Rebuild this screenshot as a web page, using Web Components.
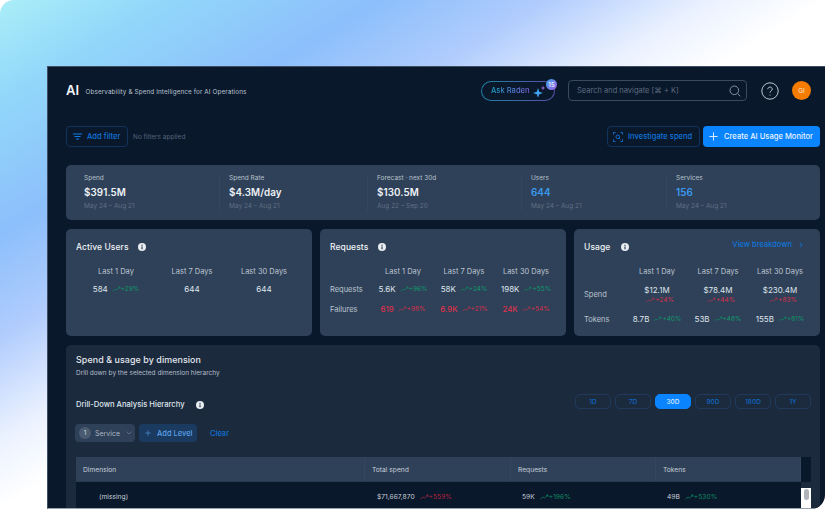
<!DOCTYPE html>
<html><head><meta charset="utf-8"><title>AI</title>
<style>
html,body{margin:0;padding:0;background:#fff;width:825px;height:509px;overflow:hidden}
body{font-family:Inter,"Liberation Sans",sans-serif;color:#dfe5ec}
</style></head><body>
<page-stage>
 <app-header></app-header>
 <app-toolbar></app-toolbar>
 <summary-bar>
  <summary-stat label="Spend" value="$391.5M" range="May 24 – Aug 21"></summary-stat>
  <summary-stat label="Spend Rate" value="$4.3M/day" range="May 24 – Aug 21"></summary-stat>
  <summary-stat label="Forecast · next 30d" value="$130.5M" range="Aug 22 – Sep 20"></summary-stat>
  <summary-stat label="Users" value="644" range="May 24 – Aug 21" accent></summary-stat>
  <summary-stat label="Services" value="156" range="May 24 – Aug 21" accent></summary-stat>
 </summary-bar>
 <card-row>
  <metric-card heading="Active Users" gap="9">
   <metric-grid cols="80px 72px 72px" rows="14px 22px">
    <grid-head>Last 1 Day</grid-head><grid-head>Last 7 Days</grid-head><grid-head>Last 30 Days</grid-head>
    <metric-value value="584" delta="+29%" tone="up"></metric-value><metric-value value="644"></metric-value><metric-value value="644"></metric-value>
   </metric-grid>
  </metric-card>
  <metric-card heading="Requests" gap="10">
   <metric-grid cols="42px 62px 60px 64px" rows="14px 22px 18px">
    <span></span><grid-head>Last 1 Day</grid-head><grid-head>Last 7 Days</grid-head><grid-head>Last 30 Days</grid-head>
    <grid-label>Requests</grid-label><metric-value value="5.6K" delta="+96%" tone="up"></metric-value><metric-value value="58K" delta="+24%" tone="up"></metric-value><metric-value value="198K" delta="+55%" tone="up"></metric-value>
    <grid-label>Failures</grid-label><metric-value value="619" delta="+98%" tone="down" bad></metric-value><metric-value value="6.9K" delta="+21%" tone="down" bad></metric-value><metric-value value="24K" delta="+54%" tone="down" bad></metric-value>
   </metric-grid>
  </metric-card>
  <metric-card heading="Usage" gap="11" link>
   <metric-grid cols="42px 62px 60px 64px" rows="14px 32px 18px">
    <span></span><grid-head>Last 1 Day</grid-head><grid-head>Last 7 Days</grid-head><grid-head>Last 30 Days</grid-head>
    <grid-label>Spend</grid-label><metric-value value="$12.1M" delta="+24%" tone="down" stack></metric-value><metric-value value="$78.4M" delta="+44%" tone="down" stack></metric-value><metric-value value="$230.4M" delta="+83%" tone="down" stack></metric-value>
    <grid-label>Tokens</grid-label><metric-value value="8.7B" delta="+40%" tone="up"></metric-value><metric-value value="53B" delta="+48%" tone="up"></metric-value><metric-value value="155B" delta="+81%" tone="up"></metric-value>
   </metric-grid>
  </metric-card>
 </card-row>
 <dimension-panel></dimension-panel>
</page-stage>
<script>
const FONT='font-family:Inter,"Liberation Sans",sans-serif;';
function el(name,css,html){
  customElements.define(name,class extends HTMLElement{
    connectedCallback(){
      if(this.shadowRoot)return;
      const r=this.attachShadow({mode:'open'});
      const a=n=>this.getAttribute(n);
      r.innerHTML='<style>'+css+'</style>'+(typeof html==='function'?html(a,this):html);
    }
  });
}
const I={
 info:s=>`<svg width="${s}" height="${s}" viewBox="0 0 16 16"><circle cx="8" cy="8" r="8" fill="#e8edf2"/><rect x="6.800" y="7" width="2.400" height="5.500" fill="#2f4158"/><rect x="6.800" y="3.500" width="2.400" height="2.200" fill="#2f4158"/></svg>`,
 trend:c=>`<svg width="9" height="6" viewBox="0 0 9 6" fill="none" stroke="${c}" stroke-width=".7"><path d="M.5 5 3 3l1.600 1L8 1"/><path d="M6 1h2v2"/></svg>`,
 plus:(s,c)=>`<svg width="${s}" height="${s}" viewBox="0 0 10 10" stroke="${c}" stroke-width="1"><path d="M5 .5v9M.5 5h9"/></svg>`
};
el('info-dot',':host{display:inline-flex;line-height:0}',(a)=>I.info(a('size')||8));

el('page-stage',`:host{display:block;position:relative;width:825px;height:509px;overflow:hidden;border-radius:14px;
  background:linear-gradient(to bottom right,#aaeef8 0%,#92d7fa 10%,#8cbffb 23%,#b0ccfd 33%,#eaf1ff 43%,#ffffff 50%);padding:66px 0 0 47px;box-sizing:border-box}
 .app{height:443px;background:#0a182c;border-top:1px solid #3d4d63;border-left:1px solid #3f5066;box-sizing:border-box;padding:0 5px 0 18px;overflow:hidden;border-bottom:1px solid #98a3ae}`,
 '<div class="app"><slot></slot></div>');

el('app-header',`:host{display:flex;align-items:center;height:47px;padding-right:9px;${FONT}}
 .ai{font-size:13px;font-weight:600;color:#f2f5f8;margin-right:6.500px;position:relative;top:-1px}
 .sub{font-size:6.300px;color:#b9c3cf;flex:1;letter-spacing:.02em;position:relative;top:1px}
 .pill{position:relative;box-sizing:border-box;width:74px;height:20px;border-radius:10px;display:flex;align-items:center;padding-left:9px;gap:3px;border:1px solid transparent;
   background:linear-gradient(#0a182c,#0a182c) padding-box,linear-gradient(90deg,#1f7f9e,#5a4fa8) border-box;margin-right:13px}
 .pill b{font-size:7.600px;font-weight:500;background:linear-gradient(90deg,#1aa3c4,#7e63df);-webkit-background-clip:text;background-clip:text;color:transparent}
 .badge{position:absolute;right:-3px;top:-3px;width:11px;height:11px;border-radius:50%;background:linear-gradient(135deg,#38a6ee,#a35ae0);font-size:6px;color:#e9f0f8;display:flex;align-items:center;justify-content:center;font-weight:600}
 .search{box-sizing:border-box;width:179px;height:21px;border:1px solid #3a4b60;border-radius:4px;display:flex;align-items:center;justify-content:space-between;padding:0 5px 0 8px;font-size:7.500px;color:#5d6c80;margin-right:14px}
 .help{margin-right:13px;line-height:0}
 .av{width:19px;height:19px;border-radius:50%;background:#f57c00;font-size:6.500px;color:#f9e9d8;display:flex;align-items:center;justify-content:center}`,
 `<span class="ai">AI</span><span class="sub">Observability &amp; Spend Intelligence for AI Operations</span>
 <div class="pill"><b>Ask Raden</b><svg width="13" height="12" viewBox="0 0 13 12"><path d="M5 3 6.200 6.800 10 8 6.200 9.200 5 13 3.800 9.200 0 8 3.800 6.800z" fill="#3fa5f0"/><path d="M10 .5l.6 1.900 1.900.6-1.900.6L10 5.500l-.6-1.900-1.900-.6 1.900-.6z" fill="#a56be8"/></svg><span class="badge">15</span></div>
 <div class="search"><span>Search and navigate [⌘ + K]</span><svg width="12" height="12" viewBox="0 0 12 12" fill="none" stroke="#8593a5" stroke-width="1"><circle cx="5.300" cy="5.300" r="4.300"/><path d="M8.500 8.500 11.300 11.300"/></svg></div>
 <div class="help"><svg width="18" height="18" viewBox="0 0 18 18" fill="none" stroke="#bcc6d2" stroke-width="1"><circle cx="9" cy="9" r="8.200"/><path d="M6.800 7.200c0-1.300 1-2.200 2.200-2.200s2.200.9 2.200 2.100c0 1.800-2.200 1.800-2.200 3.600"/><circle cx="9" cy="13" r=".6" fill="#bcc6d2" stroke="none"/></svg></div>
 <div class="av">GI</div>`);

el('app-toolbar',`:host{display:flex;align-items:center;height:21px;margin-top:12px;${FONT}font-size:7.600px;font-weight:500}
 .btn{box-sizing:border-box;height:21px;border-radius:4px;border:1px solid #13335a;color:#0f74d8;display:flex;align-items:center}
 .f{width:62px;padding-left:6px;gap:5px}
 .none{font-size:6.500px;color:#55647a;font-weight:400;margin-left:5px;flex:1}
 .inv{width:93px;padding-left:5px;gap:5px;margin-right:3px}
 .cr{width:117px;border:0;background:#0a84ff;color:#e8f3ff;padding-left:6px;gap:6px}`,
 `<div class="btn f"><svg width="9" height="7" viewBox="0 0 9 7" stroke="#0f7de8" stroke-width="1"><path d="M0 1h9M1.500 3.500h6M3 6h3"/></svg>Add filter</div><span class="none">No filters applied</span>
 <div class="btn inv"><svg width="10" height="10" viewBox="0 0 10 10" fill="none" stroke="#0f74d8" stroke-width=".9"><path d="M.5 2.500V.5h2M7.500.5h2v2M9.500 7.500v2h-2M2.500 9.500h-2v-2"/><circle cx="4.800" cy="4.800" r="1.800"/><path d="M6.200 6.200 7.400 7.400"/></svg>Investigate spend</div>
 <div class="btn cr">${I.plus(9,'#f0f6ff')}Create AI Usage Monitor</div>`);

el('summary-bar',`:host{display:grid;grid-template-columns:153px 148px 154px 145px 154px;width:754px;height:55px;box-sizing:border-box;background:#2f4158;border-radius:5px;margin-top:18px;padding:9px 0;${FONT}}`,'<slot></slot>');
el('summary-stat',`:host{display:flex;flex-direction:column;padding-left:9px;border-left:1px solid #33465d;box-sizing:border-box}
 :host(:first-child){padding-left:18px;border-left:0}
 .l{font-size:6.500px;color:#b7c1cd;line-height:9px}
 .v{font-size:9.800px;font-weight:600;color:#eef2f6;line-height:13px;margin-top:3px;letter-spacing:.01em}
 :host([accent]) .v{color:#3b9bf0}
 .r{font-size:6.500px;color:#5f6f84;line-height:9px;margin-top:3px}`,
 a=>`<div class="l">${a('label')}</div><div class="v">${a('value')}</div><div class="r">${a('range')}</div>`);

el('card-row',`:host{display:grid;grid-template-columns:246px 246px 246px;gap:8px;margin-top:9px;width:754px}`,'<slot></slot>');
el('metric-card',`:host{display:block;height:107px;box-sizing:border-box;background:#2f4158;border-radius:5px;padding:10px 10px 0;${FONT};position:relative}
 .t{display:flex;align-items:center;height:16px;font-size:8.500px;font-weight:500;color:#eef2f6;letter-spacing:.01em}
 .link{position:absolute;top:11px;right:17px;font-size:7.500px;font-weight:500;color:#0f74d8;display:flex;gap:7px;align-items:center}
 .b{margin-top:9px}`,
 (a,h)=>`<div class="t"><span>${a('heading')}</span><info-dot size="8" style="margin-left:${a('gap')}px"></info-dot></div>
 ${h.hasAttribute('link')?'<div class="link">View breakdown <svg width="4" height="6" viewBox="0 0 4 6" fill="none" stroke="#0f74d8"><path d="M1 .7 3 3 1 5.300"/></svg></div>':''}
 <div class="b"><slot></slot></div>`);
el('metric-grid',`:host{display:grid;align-items:center}`,
 (a,h)=>{h.style.gridTemplateColumns=a('cols');h.style.gridTemplateRows=a('rows');return '<slot></slot>'});
el('grid-head',`:host{display:block;text-align:center;font-size:7.500px;color:#bac4d0;${FONT}}`,'<slot></slot>');
el('grid-label',`:host{display:block;font-size:7.500px;color:#bac4d0;${FONT}}`,'<slot></slot>');
el('metric-value',`:host{display:flex;justify-content:center;align-items:center;gap:4px;${FONT};font-size:8px;color:#dfe5ec}
 :host([stack]){flex-direction:column;gap:1px;align-items:center}
 :host([bad]) .n{color:#e8304a}
 .d{display:inline-flex;align-items:center;gap:0;font-size:6.500px;white-space:nowrap}
 :host([stack]) .d{padding-left:6px}
 .up{color:#0d9a6b}.down{color:#d8304a}`,
 a=>`<span class="n">${a('value')}</span>${a('delta')?`<span class="d ${a('tone')}">${I.trend(a('tone')=='up'?'#0d8a61':'#b8324a')}${a('delta')}</span>`:''}`);

el('range-tabs',`:host{display:flex;gap:4px}
 span{box-sizing:border-box;width:36px;height:15px;border:1px solid #203a5c;border-radius:5px;font-size:6.500px;font-weight:500;color:#0f68c4;display:flex;align-items:center;justify-content:center}
 .on{background:#0a84ff;border-color:#0a84ff;color:#dcecff}`,
 ['1D','7D','30D','90D','180D','1Y'].map(x=>`<span class="${x=='30D'?'on':''}">${x}</span>`).join(''));

el('dimension-panel',`:host{display:block;width:754px;height:164px;margin-top:9px;background:#1c2a3e;border-radius:5px 5px 0 0;padding:9px 9px 0 10px;box-sizing:border-box;${FONT}}
 h2{margin:0;font-size:8.900px;font-weight:500;color:#e4e9ef;line-height:11px;letter-spacing:.01em}
 p{margin:4px 0 0;font-size:6.500px;color:#b3bdca;line-height:9px}
 .h{display:flex;justify-content:space-between;align-items:flex-start;margin-top:16px;height:15px;font-size:7.600px;font-weight:500;color:#dfe5ec}
 .h>div{display:flex;align-items:center;gap:11px;padding-top:6px}
 .chips{display:flex;align-items:center;margin-top:15px;height:18px;font-size:7.500px}
 .svc{box-sizing:border-box;width:60px;height:18px;background:#2f4158;border-radius:4px;display:flex;align-items:center;padding-left:4px;gap:4px;color:#aab5c3;margin-left:-1px;font-size:7px}
 .n{width:12px;height:12px;border-radius:50%;background:#4a5b72;display:flex;align-items:center;justify-content:center;font-size:6.500px;color:#d2d9e2}
 .add{box-sizing:border-box;width:58px;height:18px;background:#1a3a60;border-radius:4px;margin-left:4px;display:flex;align-items:center;padding-left:6px;gap:6px;color:#5aa0e6;font-weight:500}
 .clear{color:#0f74d8;font-weight:500;margin-left:13px}
 table-view{margin-top:15px}`,
 `<h2>Spend &amp; usage by dimension</h2><p>Drill down by the selected dimension hierarchy</p>
 <div class="h"><div>Drill-Down Analysis Hierarchy<info-dot size="8"></info-dot></div><range-tabs></range-tabs></div>
 <div class="chips"><div class="svc"><span class="n">1</span>Service<svg width="6" height="4" viewBox="0 0 6 4" fill="none" stroke="#66758a" stroke-width=".8" style="margin-left:2px"><path d="M.6.6 3 3 5.400.6"/></svg></div>
 <div class="add">${I.plus(6,'#5aa0e6')}Add Level</div><span class="clear">Clear</span></div>
 <table-view></table-view>`);

el('table-view',`:host{display:grid;grid-template-columns:289px 146px 145px 145px 10px;grid-template-rows:25px 27px;width:735px;${FONT}font-size:6.700px;color:#c6ced8}
 .th{background:#2f4158;display:flex;align-items:center;padding:1px 0 0 7px;border-right:1px solid #33465d;border-bottom:1px solid #293a50;box-sizing:border-box}
 .gut{background:#0a182c}
 .td{background:#0a182c;display:flex;align-items:center;padding:2px 0 0 11px;gap:5px;box-sizing:border-box}
 .d{display:inline-flex;align-items:center;font-size:6.700px}
 .up{color:#0d8a61}.down{color:#b8223c}
 .bar{background:#fff;display:flex;justify-content:center;align-items:flex-start;padding-top:1px;margin-top:6px}
 .bar i{display:block;width:5px;height:11px;border-radius:3px;background:#b0b4b9}`,
 `<div class="th">Dimension</div><div class="th">Total spend</div><div class="th">Requests</div><div class="th">Tokens</div><div class="gut"></div>
 <div class="td" style="padding-left:23px">(missing)</div>
 <div class="td" style="padding-left:12px">$71,667,870 <span class="d down">${I.trend('#a82840')}+559%</span></div>
 <div class="td">59K <span class="d up">${I.trend('#0d8a61')}+196%</span></div>
 <div class="td">49B <span class="d up">${I.trend('#0d8a61')}+530%</span></div>
 <div class="bar"><i></i></div>`);
</script>
</body></html>
